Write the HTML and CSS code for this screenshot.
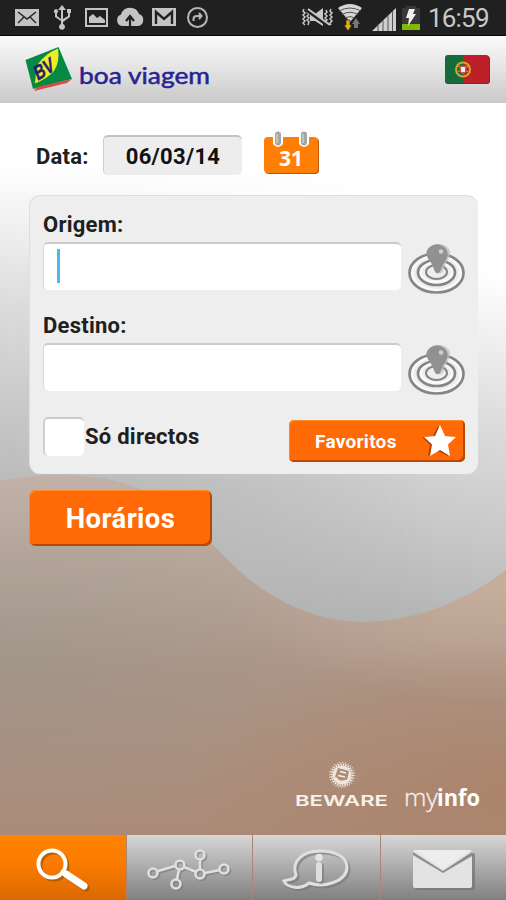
FILE: index.html
```html
<!DOCTYPE html>
<html lang="pt">
<head>
<meta charset="utf-8">
<title>Boa Viagem</title>
<link rel="stylesheet" href="styles.css">
</head>
<body>
<div class="app">
  <div class="status">
    <svg class="status-left" width="220" height="35" viewBox="0 0 220 35">
      <g fill="#c4c4c4">
        <path d="M15 9h24v17H15z"/>
        <path d="M18 12l9 7 9-7M18 23l6-6M36 23l-6-6" fill="none" stroke="#222" stroke-width="1.4"/>
        <path d="M62 5l4 5h-3v9l5-3v-3h-1V9h4v4h-1v4l-7 5v2a3 3 0 1 1-2 0v-3l-6-4v-4a2 2 0 1 1 2 0v3l4 3v-9h-3z"/>
        <path d="M86 9h21v17H86z" fill="none" stroke="#c4c4c4" stroke-width="2"/>
        <path d="M89 23v-6l4-3 4 4 3-2 5 4v3z"/>
        <path d="M122 26a6 6 0 0 1-1-11.500a9.500 9.500 0 0 1 18-.5a6.200 6.200 0 0 1-1 12z"/>
        <path d="M130 27V18m-4 3l4-5 4 5" fill="none" stroke="#202020" stroke-width="2.200"/>
        <path d="M152 8h24v18h-24z"/>
        <path d="M156 24V12l8 7 8-7v12" fill="none" stroke="#222" stroke-width="2.400"/>
      </g>
      <circle cx="197.500" cy="17.500" r="9.500" fill="none" stroke="#b7b7b7" stroke-width="2"/>
      <path d="M193.500 21v-2q0-3 3.500-3h4M199 13l2.500 3-2.500 3" fill="none" stroke="#b7b7b7" stroke-width="2"/>
    </svg>
    <div class="status-right">
      <svg width="122" height="35" viewBox="300 0 122 35">
        <g fill="none" stroke="#c9c9c9" stroke-width="1.500">
          <path d="M304 9l-1 2 2 2-2 2 2 2-2 2 2 2-2 2 2 2M308 10l-1 2 2 2-2 2 2 2-2 2 2 2-1 3M326 10l1 2-2 2 2 2-2 2 2 2-2 2 1 3M331 9l-1 2 2 2-2 2 2 2-2 2 2 2-2 2 1 2"/>
          <path d="M310 14h5l8-6v18l-8-5h-5z" fill="#c9c9c9" stroke="none"/>
          <path d="M307 10l22 16" stroke="#202020" stroke-width="4"/><path d="M308 9l22 16" stroke-width="2"/>
        </g>
        <path d="M338 8q12-8 24 0l-12 14z" fill="#d6d6d6"/>
        <path d="M339 11q11-6 22 0M342 14.500q8-4.500 16 0M345 18q5-3 10 0" fill="none" stroke="#555" stroke-width="1"/>
        <path d="M346 20h4v5h2l-4 6-4-6h2z" fill="#e5ad13" stroke="#202020" stroke-width=".6"/>
        <path d="M354 28v-4h-2l4-6 4 6h-2v4z" fill="#777"/>
        <path d="M372 31l24-23v23z" fill="#cfcfcf"/>
        <path d="M378 31V24M383 31V20M388 31V15M392.500 31V11" stroke="#555" stroke-width="1"/>
        <path d="M406 6h10v2h4v22h-18V8h4z" fill="#383838"/>
        <path d="M402 24h18v6h-18z" fill="#83b900"/>
        <path d="M409 9h6l-2 5h3l-8 12 1-8h-3z" fill="#f0f0f0"/>
      </svg>
      <span class="clock">16:59</span>
    </div>
  </div>

  <header class="header">
    <svg width="190" height="50" viewBox="24 44 190 50">
      <path d="M25.500 60L58.500 47l13.500 32L33 89z" fill="#068a43"/>
      <path d="M34 91l3-4 35-8-5 4z" fill="#d94b4b"/>
      <path d="M38 64Q45 54 58 48.500Q60 62 54 71Q48 78 35 83.500Q36 70 38 64z" fill="#f1ed24"/>
      <text class="bv" transform="translate(37.500 81) rotate(-32) skewX(-12)" textLength="21" lengthAdjust="spacingAndGlyphs">BV</text>
      <text class="brand" x="79" y="84" textLength="131" lengthAdjust="spacingAndGlyphs">boa viagem</text>
    </svg>
    <svg width="46" height="31" viewBox="0 0 46 31">
      <defs><clipPath id="flag"><rect x="0" y="1" width="44" height="28" rx="3"/></clipPath></defs>
      <rect x="0" y="2" width="45" height="28" rx="3" fill="#6d3038"/>
      <g clip-path="url(#flag)"><path d="M0 0h18v30H0z" fill="#176a3c"/><path d="M18 0h27v30H18z" fill="#bd2028"/></g>
      <circle cx="18" cy="15.500" r="7" fill="none" stroke="#cda82b" stroke-width="2"/>
      <path d="M12.500 12l11 6M12.500 18l11-6" stroke="#cda82b" stroke-width="1"/>
      <path d="M14.500 11.500h7v5q-.5 3-3.500 4-3-1-3.500-4z" fill="#c9504d"/><path d="M16 13h4v5h-4z" fill="#eee"/>
    </svg>
  </header>

  <main class="main">
    <svg class="backdrop" width="506" height="732" viewBox="0 103 506 732">
      <defs>
        <linearGradient id="bowl" gradientUnits="userSpaceOnUse" x1="430" y1="260" x2="360" y2="625">
          <stop offset="0" stop-color="#fff"/><stop offset=".4" stop-color="#dcdcdc"/><stop offset=".7" stop-color="#c8c8c8"/><stop offset="1" stop-color="#b0b1b1"/>
        </linearGradient>
        <linearGradient id="left" gradientUnits="userSpaceOnUse" x1="0" y1="165" x2="0" y2="490">
          <stop offset="0" stop-color="#fff"/><stop offset=".45" stop-color="#dadada"/><stop offset="1" stop-color="#b9b9b9"/>
        </linearGradient>
        <linearGradient id="side" x1="0" x2="1" y1="0" y2="0">
          <stop offset="0" stop-color="#fff"/><stop offset=".3" stop-color="#fff" stop-opacity=".8"/><stop offset="1" stop-color="#fff" stop-opacity="0"/>
        </linearGradient>
        <mask id="sidefade"><rect y="103" width="420" height="550" fill="url(#side)"/></mask>
        <linearGradient id="sand" gradientUnits="userSpaceOnUse" x1="0" y1="476" x2="0" y2="835">
          <stop offset="0" stop-color="#c2b1a9"/><stop offset=".3" stop-color="#b5a498"/><stop offset=".55" stop-color="#ac9586"/><stop offset="1" stop-color="#aa8b78"/>
        </linearGradient>
        <radialGradient id="cool" gradientUnits="userSpaceOnUse" cx="0" cy="0" r="1" gradientTransform="translate(0 660) scale(340 170)">
          <stop offset="0" stop-color="#93938d" stop-opacity=".42"/><stop offset="1" stop-color="#93938d" stop-opacity="0"/>
        </radialGradient>
        <radialGradient id="light" gradientUnits="userSpaceOnUse" cx="0" cy="0" r="1" gradientTransform="translate(506 585) scale(280 120)">
          <stop offset="0" stop-color="#d0b39f" stop-opacity=".65"/><stop offset="1" stop-color="#d0b39f" stop-opacity="0"/>
        </radialGradient>
        <radialGradient id="warm" gradientUnits="userSpaceOnUse" cx="0" cy="0" r="1" gradientTransform="translate(506 790) scale(320 150)">
          <stop offset="0" stop-color="#ad7c5d" stop-opacity=".55"/><stop offset="1" stop-color="#ad7c5d" stop-opacity="0"/>
        </radialGradient>
        <clipPath id="hill"><path d="M0 481Q50 471 102 478C170 489 200 535 245 576C285 609 325 622 365 622C425 621 475 594 506 570V835H0z"/></clipPath>
      </defs>
      <path d="M0 103h506v732H0z" fill="url(#bowl)"/>
      <path d="M0 103h420v550H0z" fill="url(#left)" mask="url(#sidefade)"/>
      <g clip-path="url(#hill)">
        <path d="M0 460h506v375H0z" fill="url(#sand)"/>
        <path d="M0 460h506v375H0z" fill="url(#cool)"/>
        <path d="M0 460h506v375H0z" fill="url(#light)"/>
        <path d="M0 460h506v375H0z" fill="url(#warm)"/>
      </g>
    </svg>

    <form class="search">
      <div class="date-row">
        <span class="label">Data:</span>
        <span class="date">06/03/14</span>
        <svg width="58" height="44" viewBox="262 131 58 44">
          <rect x="265" y="138" width="54" height="36" rx="4" fill="#b95505"/>
          <rect x="264" y="137" width="54" height="36" rx="4" fill="#ff7e06"/>
          <path d="M273 134q5-5 10 0v10q-5 6-10 0zM299 134q5-5 10 0v10q-5 6-10 0z" fill="#fff"/>
          <rect x="275" y="131.500" width="6" height="14" rx="3" fill="#a5a5a5"/><rect x="301" y="131.500" width="6" height="14" rx="3" fill="#a5a5a5"/>
          <path d="M277 134v9M303 134v9" stroke="#ccc" stroke-width="1.500"/>
          <text class="day" x="279" y="166" textLength="24" lengthAdjust="spacingAndGlyphs">31</text>
        </svg>
      </div>

      <section class="panel">
        <div class="label origin">Origem:</div>
        <div class="field-row">
          <div class="field"><span class="caret"></span></div>
          <svg class="pin" width="58" height="52" viewBox="0 0 58 52">
            <g fill="none" stroke="#fafafa" stroke-width="5"><ellipse cx="28.500" cy="30" rx="25.500" ry="18.500"/><ellipse cx="28.500" cy="29" rx="17" ry="11.500"/></g>
            <g fill="none" stroke="#858585" stroke-width="2.700"><ellipse cx="28.500" cy="30" rx="27" ry="19.500"/><ellipse cx="28.500" cy="29.500" rx="18.500" ry="12.500"/><ellipse cx="28.500" cy="29" rx="10.500" ry="7" stroke-width="2"/></g>
            <path d="M20 7c4-8 18-8 22 1 1 7-4 10-6 17-2 7-6 8-8 0-2-8-9-11-8-18z" fill="#bbb" opacity=".7"/>
            <path d="M18.500 9c3-10 18-10 21 0 1 7-4 10-6 16-2 7-6 7-8 0-2-7-8-10-7-16z" fill="#919191"/>
            <circle cx="33" cy="8.500" r="2.300" fill="#cfcfcf"/>
          </svg>
        </div>
        <div class="label destination">Destino:</div>
        <div class="field-row">
          <div class="field"></div>
          <svg class="pin" width="58" height="52" viewBox="0 0 58 52">
            <g fill="none" stroke="#fafafa" stroke-width="5"><ellipse cx="28.500" cy="30" rx="25.500" ry="18.500"/><ellipse cx="28.500" cy="29" rx="17" ry="11.500"/></g>
            <g fill="none" stroke="#858585" stroke-width="2.700"><ellipse cx="28.500" cy="30" rx="27" ry="19.500"/><ellipse cx="28.500" cy="29.500" rx="18.500" ry="12.500"/><ellipse cx="28.500" cy="29" rx="10.500" ry="7" stroke-width="2"/></g>
            <path d="M20 7c4-8 18-8 22 1 1 7-4 10-6 17-2 7-6 8-8 0-2-8-9-11-8-18z" fill="#bbb" opacity=".7"/>
            <path d="M18.500 9c3-10 18-10 21 0 1 7-4 10-6 16-2 7-6 7-8 0-2-7-8-10-7-16z" fill="#919191"/>
            <circle cx="33" cy="8.500" r="2.300" fill="#cfcfcf"/>
          </svg>
        </div>
        <div class="options">
          <span class="checkbox"></span>
          <span class="label direct">Só directos</span>
          <div class="button favorites">
            <span>Favoritos</span>
            <svg width="34" height="34" viewBox="0 0 34 34">
              <path d="M16 2l5 10 11 1-8 8 2 11-10-5-10 5 2-11-8-8 11-1z" fill="#ac4100" transform="translate(-1 0)"/>
              <path d="M17 1l5 11 11 1-8 7.500 2 11.500-10-6-10 6 2-11.500L1 13l11-1z" fill="#fff"/>
            </svg>
          </div>
        </div>
      </section>

      <div class="button schedules">Horários</div>
    </form>

    <footer class="credits">
      <svg width="190" height="54" viewBox="292 760 190 54">
        <g fill="none" stroke="#f7eee9">
          <circle cx="342" cy="775" r="7.500" stroke-width="4" opacity=".9"/>
          <circle cx="342" cy="775" r="10.500" stroke-width="2" stroke-dasharray="1.500 1"/>
          <circle cx="342" cy="775" r="12.500" stroke-width="1.500" stroke-dasharray="1 1.800" opacity=".7"/>
        </g>
        <path d="M338 768l11 3-2 9-12-3z" fill="#ad8c78"/>
        <path d="M340 771.500l6 1.500M338 775.500l7 1.500" stroke="#f7eee9" stroke-width="1.400"/>
        <text class="beware" x="295" y="806" textLength="93" lengthAdjust="spacingAndGlyphs">BEWARE</text>
        <text class="my" x="404" y="806" textLength="34" lengthAdjust="spacingAndGlyphs">my</text>
        <text class="info" x="437" y="806" textLength="43" lengthAdjust="spacingAndGlyphs">info</text>
      </svg>
    </footer>
  </main>

  <nav class="tabs">
    <div class="tab active">
      <svg width="126" height="65" viewBox="0 835 126 65">
        <g fill="none" stroke="#9b5000" opacity=".65" transform="translate(2 2)"><circle cx="52" cy="864" r="13.500" stroke-width="4"/><path d="M66 874l18 12" stroke-width="7" stroke-linecap="round"/></g>
        <g fill="none" stroke="#fff"><circle cx="52" cy="864" r="13.500" stroke-width="4"/><path d="M61 871l5 3.500" stroke-width="4"/><path d="M66 874l18 12" stroke-width="7" stroke-linecap="round"/></g>
      </svg>
    </div>
    <div class="tab">
      <svg width="126" height="65" viewBox="127 835 126 65">
        <g fill="none" stroke="#777" stroke-width="2.600" opacity=".6" transform="translate(1.500 1.500)"><path d="M158 871l17-5M184 867l12 5M179 870l-2 9M200 869v-10M205 873l15-3"/><circle cx="153" cy="873" r="4.500"/><circle cx="180" cy="865" r="4.500"/><circle cx="176" cy="884" r="4.500"/><circle cx="200" cy="874" r="4.500"/><circle cx="200" cy="855" r="4.500"/><circle cx="224" cy="869" r="4.500"/></g>
        <g fill="none" stroke="#e0e0e0" stroke-width="2.600"><path d="M158 871l17-5M184 867l12 5M179 870l-2 9M200 869v-10M205 873l15-3"/><circle cx="153" cy="873" r="4.500"/><circle cx="180" cy="865" r="4.500"/><circle cx="176" cy="884" r="4.500"/><circle cx="200" cy="874" r="4.500"/><circle cx="200" cy="855" r="4.500"/><circle cx="224" cy="869" r="4.500"/></g>
      </svg>
    </div>
    <div class="tab">
      <svg width="126" height="65" viewBox="253 835 126 65">
        <path d="M309 883C323 888 347 882 347 867C347 857 335 851 320 851C303 851 291 861 296 875C295 880 290 879 284 881C287 888 301 890 309 883Z" fill="none" stroke="#747474" opacity=".6" stroke-width="3" transform="translate(2 2)"/>
        <path d="M309 883C323 888 347 882 347 867C347 857 335 851 320 851C303 851 291 861 296 875C295 880 290 879 284 881C287 888 301 890 309 883Z" fill="none" stroke="#e0e0e0" stroke-width="3"/>
        <path d="M321 866v15" stroke="#777" stroke-width="6" stroke-linecap="round" opacity=".6"/>
        <path d="M319 865v14" stroke="#dfdfdf" stroke-width="6" stroke-linecap="round"/><circle cx="319" cy="857.500" r="3.800" fill="#e4e4e4"/>
      </svg>
    </div>
    <div class="tab">
      <svg width="125" height="65" viewBox="381 835 125 65">
        <rect x="415" y="853" width="60" height="37" rx="2" fill="#747474" opacity=".7"/>
        <rect x="413" y="850" width="59" height="38" rx="2" fill="#e3e3e3"/>
        <path d="M413 852l30 19 29-19v4l-29 17-30-18z" fill="#8d8d8d"/>
        <path d="M414 850h57l-28 19z" fill="#ededed"/>
      </svg>
    </div>
  </nav>
</div>
</body>
</html>
```

FILE: styles.css
```css
* { box-sizing: border-box; }
body { margin: 0; font-family: Roboto, "Liberation Sans", sans-serif; }
svg { display: block; flex: none; }
.app { width: 506px; height: 900px; display: flex; flex-direction: column; overflow: hidden; }

.status { height: 36px; flex: none; background: #202020; display: flex; justify-content: space-between; border-bottom: 1px solid #080808; }
.status-right { display: flex; padding-right: 14px; gap: 6px; }
.clock { width: 64px; color: #c9c9c9; font-size: 26px; line-height: 36px; letter-spacing: -.8px; white-space: nowrap; }

.header { height: 67px; flex: none; padding: 8px 15px 8px 24px; display: flex; justify-content: space-between; align-items: flex-start; background: linear-gradient(#fafafa, #e8e8e8 40%, #c9c9c9); }
.header svg + svg { margin-top: 10px; }
.bv { font: bold 20px "Liberation Sans", sans-serif; fill: #25206e; stroke: #25206e; stroke-width: .5; }
.brand { font: 23px Lato, sans-serif; fill: #262490; stroke: #262490; stroke-width: .5; }

.main { height: 732px; flex: none; position: relative; }
.backdrop { position: absolute; inset: 0; z-index: 0; }
.search { position: relative; padding: 28px 28px 0 29px; }
.label { font-size: 22px; line-height: 26px; font-weight: 700; letter-spacing: .25px; color: #202020; white-space: nowrap; }
.date-row { display: flex; align-items: flex-start; height: 64px; padding-left: 7px; }
.date-row .label { width: 67px; padding-top: 13px; }
.date { width: 139px; height: 40px; margin: 4px 20px 0 0; display: flex; align-items: center; justify-content: center; background: #ededed; border-radius: 5px; border-top: 2px solid #c2c2c2; border-left: 1px solid #cecece; font-size: 22px; font-weight: 700; letter-spacing: .3px; color: #111; }
.day { font: bold 22px "Open Sans", sans-serif; fill: #fff; }

.panel { height: 279px; padding: 16px 12px 0 14px; border-radius: 11px; background: #eee; border-top: 1px solid #dedede; border-left: 1px solid #dedede; }
.panel > .label { height: 26px; margin-left: -1px; }
.panel > .destination { margin-top: 20px; }
.field-row { display: flex; justify-content: space-between; height: 51px; margin-top: 4px; margin-left: -1px; }
.pin { margin-top: 1px; }
.field { width: 358px; height: 48px; padding: 5px 0 0 13px; background: #fff; border-radius: 5px; border-top: 2px solid #cbcbcb; border-left: 1px solid #d8d8d8; }
.caret { display: block; width: 3px; height: 34px; background: #4db6ec; }
.options { display: flex; margin-top: 23px; align-items: flex-start; }
.checkbox { width: 41px; height: 39px; margin-left: -1px; margin-right: 1px; background: #fff; border-radius: 5px; border-top: 2px solid #c9c9c9; border-left: 2px solid #d0d0d0; }
.direct { width: 204px; padding-top: 7px; }
.button { color: #fff; font-weight: 700; background: #ff6a06; border-radius: 5px; box-shadow: inset -2px -2px 0 #b64a05, inset 1px 1px 0 #ff8a28; }
.favorites { width: 176px; height: 42px; margin-top: 3px; padding: 0 8px 0 26px; display: flex; justify-content: space-between; align-items: center; font-size: 19px; letter-spacing: .3px; }
.schedules { width: 183px; height: 56px; margin-top: 16px; border-radius: 7px; text-align: center; font-size: 27.5px; letter-spacing: .4px; line-height: 58px; }

.credits { position: absolute; right: 24px; bottom: 21px; }
.beware { font: 600 15px Inter, sans-serif; fill: #f8f0eb; }
.my { font: 300 24px "Open Sans", sans-serif; fill: #f8f0eb; stroke: #f8f0eb; stroke-width: .3; }
.info { font: bold 23px "Open Sans", sans-serif; fill: #fff; }

.tabs { height: 65px; flex: none; display: grid; grid-template-columns: 126px 125px 127px 125px; column-gap: 1px; background: #ad8670; }
.tab { overflow: hidden; background: linear-gradient(#d7d7d7, #b4b4b4 40%, #808080); }
.active { background: linear-gradient(#ff8400, #fb7b00 45%, #da6900); }
```
